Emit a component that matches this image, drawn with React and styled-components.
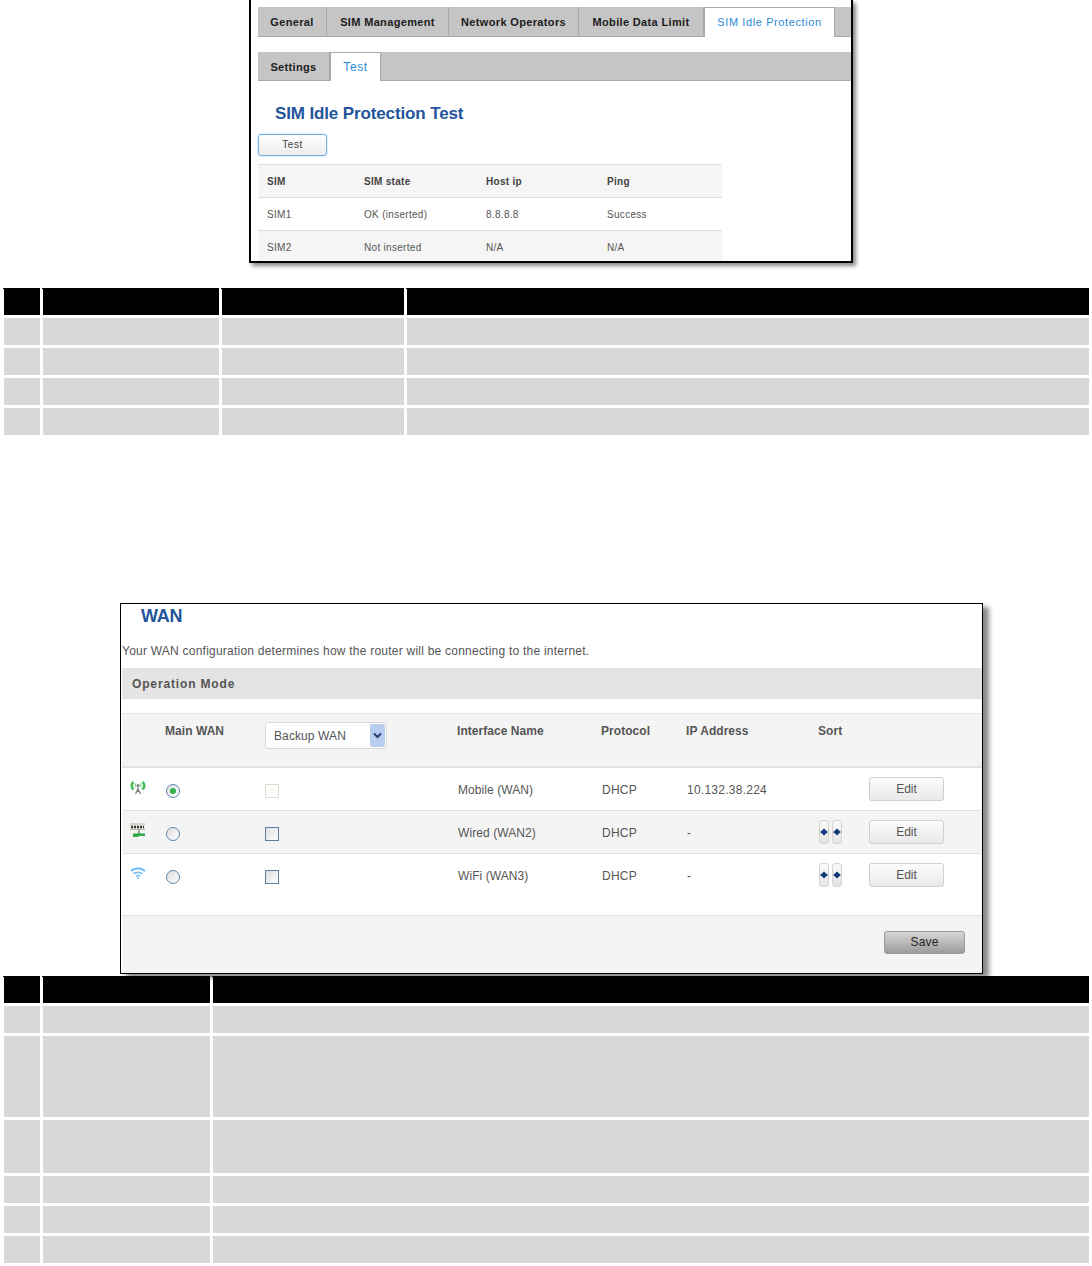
import React from "react";
import styled, { createGlobalStyle } from "styled-components";

const Global = createGlobalStyle`
  html, body { margin: 0; padding: 0; background: #fff; }
  body { font-family: "Liberation Sans", Arial, sans-serif; color: #555; }
`;

const Page = styled.div`
  width: 1092px;
  height: 1266px;
  overflow: hidden;
`;

/* ---------- spec tables (text-free grey grids) ---------- */
const SpecGrid = styled.div`
  display: grid;
  grid-template-columns: ${(p) => p.$cols};
  gap: 3px;
  margin: ${(p) => p.$margin};
  width: 1085px;
`;
const SpecCell = styled.div`
  position: relative;
  height: ${(p) => p.$h}px;
  background: ${(p) => (p.$head ? "#000" : "#d8d8d8")};
  &::before {
    content: "";
    position: absolute;
    left: -1px;
    top: 0;
    width: 1px;
    height: 1px;
    background: inherit;
  }
`;

function SpecTable({ cols, count, rows, margin }) {
  return (
    <SpecGrid $cols={cols} $margin={margin}>
      {rows.flatMap((h, r) =>
        Array.from({ length: count }, (_, c) => (
          <SpecCell key={`${r}-${c}`} $h={h} $head={r === 0} />
        ))
      )}
    </SpecGrid>
  );
}

/* ---------- screenshot 1 ---------- */
const TestShot = styled.section`
  box-sizing: border-box;
  width: 604px;
  height: 263px;
  margin-left: 249px;
  padding: 7px 0 0 7px;
  background: #fff;
  border: solid #000;
  border-width: 0 2px 2px 2px;
  box-shadow: 3px 3px 4px #8a8a8a;
  overflow: hidden;
`;
const TabBar = styled.div`
  display: flex;
  box-sizing: border-box;
  height: ${(p) => p.$h}px;
  margin-bottom: ${(p) => p.$mb}px;
  background: #c5c5c5;
  border-bottom: 1px solid #a9a9a9;
`;
const Tab = styled.div`
  box-sizing: border-box;
  width: ${(p) => p.$w}px;
  height: ${(p) => p.$h}px;
  display: flex;
  align-items: center;
  justify-content: center;
  padding-top: ${(p) => (p.$active ? 0 : 1)}px;
  padding-bottom: ${(p) => p.$pb || 0}px;
  font-size: ${(p) => p.$fs}px;
  font-weight: ${(p) => (p.$active ? 400 : 700)};
  letter-spacing: ${(p) => (p.$active ? 0.6 : 0.35)}px;
  color: ${(p) => (p.$active ? "#2a8ad8" : "#1c1c1c")};
  background: ${(p) => (p.$active ? "#fff" : "transparent")};
  border-right: 1px solid #a9a9a9;
  ${(p) => p.$active && "border-left: 1px solid #a9a9a9; border-top: 1px solid #a9a9a9;"}
`;
const TestTitle = styled.h2`
  margin: 0 0 8px 17px;
  font-size: 17px;
  line-height: 24px;
  font-weight: 700;
  letter-spacing: -0.13px;
  color: #22559c;
`;
const FocusButton = styled.div`
  box-sizing: border-box;
  width: 69px;
  height: 22px;
  display: flex;
  align-items: center;
  justify-content: center;
  padding-bottom: 1px;
  font-size: 10px;
  letter-spacing: 0.5px;
  color: #444;
  background: linear-gradient(#fefefe, #ececec);
  border: 1px solid #6fb0e6;
  border-radius: 3px;
  box-shadow: 0 0 2px #8cc4f0;
  margin-bottom: 8px;
`;
const SimTable = styled.div`
  width: 464px;
`;
const SimRow = styled.div`
  box-sizing: border-box;
  display: grid;
  grid-template-columns: 97px 122px 121px 1fr;
  align-items: center;
  height: 33px;
  padding-left: 9px;
  background: ${(p) => (p.$shade ? "#f5f5f5" : "#fff")};
  border-top: 1px solid #dcdcdc;
  font-size: 10px;
  letter-spacing: 0.3px;
  font-weight: ${(p) => (p.$head ? 700 : 400)};
  color: ${(p) => (p.$head ? "#444" : "#555")};
`;

/* ---------- screenshot 2 ---------- */
const WanShot = styled.section`
  box-sizing: border-box;
  width: 863px;
  height: 371px;
  margin: 168px 0 0 120px;
  background: #fff;
  border: 1px solid #000;
  box-shadow: 6px 4px 5px #888;
  display: flex;
  flex-direction: column;
`;
const WanTitle = styled.h2`
  margin: 1px 0 0 20px;
  font-size: 18px;
  line-height: 22px;
  font-weight: 700;
  letter-spacing: -0.2px;
  color: #22559c;
`;
const WanIntro = styled.p`
  margin: 14px 0 7px 1px;
  font-size: 12px;
  line-height: 20px;
  letter-spacing: 0.23px;
  color: #555;
`;
const SectionBar = styled.div`
  height: 31px;
  margin: 0 0 14px 1px;
  padding-left: 10px;
  display: flex;
  align-items: center;
  background: #e4e4e4;
  font-size: 12px;
  font-weight: 700;
  letter-spacing: 0.85px;
  color: #555;
`;
const WanRow = styled.div`
  box-sizing: border-box;
  display: grid;
  grid-template-columns: 43px 100px 192px 144px 85px 132px 51px 1fr;
  align-items: ${(p) => (p.$head ? "start" : "center")};
  height: ${(p) => p.$h}px;
  margin-left: 1px;
  background: ${(p) => (p.$shade ? "#f4f4f4" : "#fff")};
  border-top: 1px solid #e2e2e2;
  ${(p) => p.$head && "border-bottom: 1px solid #e2e2e2; padding-top: 8px;"}
  font-size: 12px;
  letter-spacing: 0.25px;
  color: #555;
`;
const RowText = styled.span`
  padding: 1px 0 0 1px;
  letter-spacing: ${(p) => (p.$tight ? 0.08 : 0.25)}px;
`;
const HeadLabel = styled.div`
  font-weight: 700;
  letter-spacing: 0.05px;
  line-height: 18px;
  color: #555;
`;
const FakeSelect = styled.div`
  box-sizing: border-box;
  width: 122px;
  height: 27px;
  display: flex;
  align-items: center;
  justify-content: space-between;
  padding: 0 1px 0 8px;
  background: #fff;
  border: 1px solid #d8d8d8;
  border-radius: 3px;
  letter-spacing: 0.1px;
`;
const SelectArrow = styled.span`
  width: 15px;
  height: 23px;
  display: flex;
  align-items: center;
  justify-content: center;
  background: #b9cdf0;
  border-radius: 2px;
`;
const IconCell = styled.div`
  display: flex;
  align-items: center;
  padding-left: 8px;
  margin-top: -3px;
  height: 15px;
`;
const Radio = styled.span`
  box-sizing: border-box;
  display: flex;
  align-items: center;
  justify-content: center;
  width: 14px;
  height: 14px;
  margin: 3px 0 0 1px;
  border-radius: 50%;
  border: 1.5px solid #5c83aa;
  background: linear-gradient(135deg, #dedede, #fff);
  &::after {
    content: "";
    display: ${(p) => (p.$on ? "block" : "none")};
    width: 6px;
    height: 6px;
    border-radius: 50%;
    background: #34b04a;
  }
`;
const Check = styled.span`
  box-sizing: border-box;
  display: block;
  width: 14px;
  height: 14px;
  margin-top: 3px;
  border: ${(p) => (p.$off ? "1px solid #dcdcd4" : "1.5px solid #5c7fa6")};
  background: ${(p) => (p.$off ? "#fdfdfb" : "linear-gradient(135deg, #dedede, #fdfdfd)")};
`;
const SortGroup = styled.div`
  display: flex;
  gap: 3px;
  margin-left: 1px;
`;
const SortButton = styled.span`
  box-sizing: border-box;
  width: 10px;
  height: 24px;
  display: flex;
  align-items: center;
  justify-content: center;
  background: linear-gradient(#fafafa, #e4e4e4);
  border: 1px solid #d4d4d4;
  border-radius: 3px;
`;
const EditButton = styled.div`
  box-sizing: border-box;
  width: 75px;
  height: 24px;
  display: flex;
  align-items: center;
  justify-content: center;
  background: linear-gradient(#fcfcfc, #e9e9e9);
  border: 1px solid #d0d0d0;
  border-radius: 3px;
  letter-spacing: 0;
  color: #555;
`;
const WanFooter = styled.div`
  flex: 1;
  margin: 19px 0 0 1px;
  display: flex;
  justify-content: flex-end;
  padding: 15px 17px 0 0;
  background: #f4f4f4;
  border-top: 1px solid #e2e2e2;
`;
const SaveButton = styled.div`
  box-sizing: border-box;
  width: 81px;
  height: 23px;
  display: flex;
  align-items: center;
  justify-content: center;
  padding-bottom: 1px;
  background: linear-gradient(#d6d6d6, #9c9c9c);
  border: 1px solid #9a9a9a;
  border-radius: 3px;
  font-size: 12px;
  letter-spacing: 0.2px;
  color: #222;
`;

const Antenna = () => (
  <svg width="16" height="14" viewBox="0 0 16 14" fill="none">
    <path d="M3.500 1C1 3 1 6 3.500 8.500" stroke="#46bb5a" strokeWidth="2.600" />
    <path d="M12.500 1c2.500 2 2.500 5 0 7.500" stroke="#46bb5a" strokeWidth="2.600" />
    <path d="M6 2.500c-1 1-1 2.500 0 3.500M10 2.500c1 1 1 2.500 0 3.500" stroke="#8ed79a" strokeWidth="1.300" />
    <circle cx="8" cy="4.500" r="1.300" fill="#666" />
    <path d="M8 6v5M5.500 13 8 8l2.500 5" stroke="#777" strokeWidth="1.200" />
  </svg>
);
const Ethernet = () => (
  <svg width="16" height="15" viewBox="0 0 16 15" fill="none">
    <path d="M0 1h15M0 6.500h15" stroke="#b5b5b5" strokeWidth="1" />
    <path d="M0 2h15v4H0z" fill="#ece9d8" />
    <path d="M1 4h13" stroke="#333" strokeWidth="2.400" strokeDasharray="2 1" />
    <path d="M9 7v3" stroke="#8a8a8a" strokeWidth="1.500" />
    <path d="M3 10.500h4l2-1 1 1h5V13H9l-1 1H3z" fill="#2eaa4c" />
  </svg>
);
const Wifi = () => (
  <svg width="16" height="13" viewBox="0 0 16 13" fill="none">
    <path d="M1 4c4-3.500 10-3.500 14 0" stroke="#74bcf4" strokeWidth="2.200" />
    <path d="M3.500 6.800c2.500-2 6.500-2 9 0" stroke="#74bcf4" strokeWidth="1.800" />
    <path d="M6 9.300c1.200-1 2.800-1 4 0" stroke="#74bcf4" strokeWidth="1.500" />
    <circle cx="8" cy="11.300" r="1" fill="#74bcf4" />
  </svg>
);
const Chevron = () => (
  <svg width="9" height="7" viewBox="0 0 9 7" fill="none">
    <path d="M1 1.500 4.500 5 8 1.500" stroke="#1f3f74" strokeWidth="2" />
  </svg>
);
const SortMark = () => (
  <svg width="8" height="8" viewBox="0 0 8 8">
    <path d="M4 .5 6 2.500 8 4 6 5.500 4 7.500 2 5.500 0 4 2 2.500z" fill="#0f3a78" />
  </svg>
);

const wanRows = [
  { icon: <Antenna />, on: true, off: true, name: "Mobile (WAN)", ip: "10.132.38.224" },
  { icon: <Ethernet />, name: "Wired (WAN2)", ip: "-", sort: true, shade: true },
  { icon: <Wifi />, name: "WiFi (WAN3)", ip: "-", sort: true },
];

const simRows = [
  ["SIM", "SIM state", "Host ip", "Ping"],
  ["SIM1", "OK (inserted)", "8.8.8.8", "Success"],
  ["SIM2", "Not inserted", "N/A", "N/A"],
];

export default function App() {
  return (
    <Page>
      <Global />
      <TestShot>
        <TabBar $h={30} $mb={15}>
          <Tab $w={69} $h={29} $fs={11}>General</Tab>
          <Tab $w={122} $h={29} $fs={11}>SIM Management</Tab>
          <Tab $w={130} $h={29} $fs={11}>Network Operators</Tab>
          <Tab $w={125} $h={29} $fs={11}>Mobile Data Limit</Tab>
          <Tab $w={131} $h={30} $fs={11} $pb={2} $active>SIM Idle Protection</Tab>
        </TabBar>
        <TabBar $h={29} $mb={21}>
          <Tab $w={72} $h={28} $fs={11}>Settings</Tab>
          <Tab $w={51} $h={29} $fs={12} $active>Test</Tab>
        </TabBar>
        <TestTitle>SIM Idle Protection Test</TestTitle>
        <FocusButton>Test</FocusButton>
        <SimTable>
          {simRows.map((cells, i) => (
            <SimRow key={cells[0]} $head={i === 0} $shade={i !== 1}>
              {cells.map((c) => (
                <span key={c}>{c}</span>
              ))}
            </SimRow>
          ))}
        </SimTable>
      </TestShot>

      <SpecTable
        cols="36px 176px 182px 1fr"
        count={4}
        rows={[27, 27, 27, 27, 27]}
        margin="25px 0 0 4px"
      />

      <WanShot>
        <WanTitle>WAN</WanTitle>
        <WanIntro>Your WAN configuration determines how the router will be connecting to the internet.</WanIntro>
        <SectionBar>Operation Mode</SectionBar>
        <WanRow $h={54} $head $shade>
          <span />
          <HeadLabel>Main WAN</HeadLabel>
          <FakeSelect>
            Backup WAN
            <SelectArrow>
              <Chevron />
            </SelectArrow>
          </FakeSelect>
          <HeadLabel>Interface Name</HeadLabel>
          <HeadLabel>Protocol</HeadLabel>
          <HeadLabel>IP Address</HeadLabel>
          <HeadLabel>Sort</HeadLabel>
          <span />
        </WanRow>
        {wanRows.map((r) => (
          <WanRow key={r.name} $h={43} $shade={r.shade}>
            <IconCell>{r.icon}</IconCell>
            <div><Radio $on={r.on} /></div>
            <div><Check $off={r.off} /></div>
            <RowText $tight>{r.name}</RowText>
            <RowText>DHCP</RowText>
            <RowText>{r.ip}</RowText>
            {r.sort ? (
              <SortGroup>
                <SortButton><SortMark /></SortButton>
                <SortButton><SortMark /></SortButton>
              </SortGroup>
            ) : (
              <span />
            )}
            <EditButton>Edit</EditButton>
          </WanRow>
        ))}
        <WanFooter>
          <SaveButton>Save</SaveButton>
        </WanFooter>
      </WanShot>

      <SpecTable
        cols="36px 167px 1fr"
        count={3}
        rows={[27, 27, 81, 53, 27, 27, 27]}
        margin="2px 0 0 4px"
      />
    </Page>
  );
}
